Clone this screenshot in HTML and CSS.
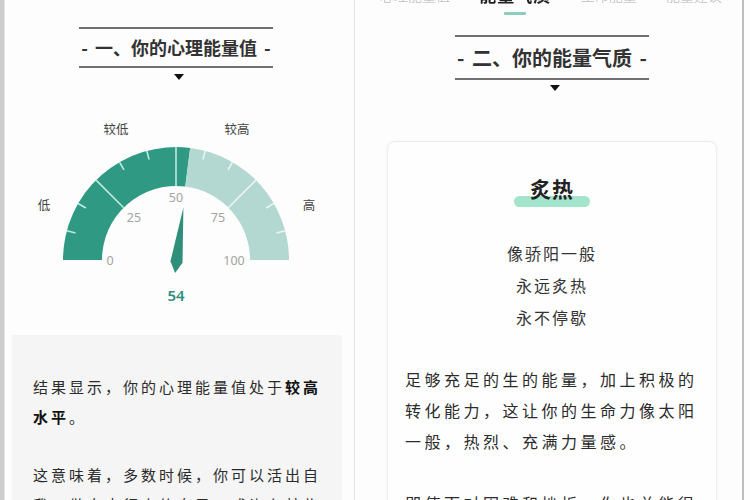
FILE: index.html
```html
<!DOCTYPE html>
<html lang="zh-CN">
<head>
<meta charset="utf-8">
<link rel="stylesheet" href="styles.css">
</head>
<body>
<div class="strip"></div>
<section class="panel left">
  <div class="heading h1">
    <div class="rule"></div>
    <div class="htext">- 一、你的心理能量值 -</div>
    <div class="rule"></div>
  </div>
  <div class="tri"></div>
  <svg class="gauge" width="342" height="195" viewBox="5 110 342 195" xmlns="http://www.w3.org/2000/svg">
    <path d="M63 260 A113 113 0 0 1 190.16 147.89 L185.27 186.58 A74 74 0 0 0 102 260 Z" fill="#2f9984"/>
    <path d="M190.16 147.89 A113 113 0 0 1 289 260 L250 260 A74 74 0 0 0 185.27 186.58 Z" fill="#b3d8d1"/>
    <g stroke="#bdebe1" stroke-width="1.6">
      <line x1="96.1" y1="180.1" x2="123.7" y2="207.7"/>
      <line x1="176" y1="147" x2="176" y2="186"/>
      <line x1="66.9" y1="230.8" x2="75.5" y2="233.1"/>
      <line x1="78.1" y1="203.5" x2="85.9" y2="208"/>
      <line x1="119.5" y1="162.1" x2="124" y2="169.9"/>
      <line x1="146.8" y1="150.9" x2="149.1" y2="159.5"/>
    </g>
    <g stroke="#e9f5f2" stroke-width="1.6">
      <line x1="255.9" y1="180.1" x2="228.3" y2="207.7"/>
      <line x1="205.2" y1="150.9" x2="202.9" y2="159.5"/>
      <line x1="232.5" y1="162.1" x2="228" y2="169.9"/>
      <line x1="273.9" y1="203.5" x2="266.1" y2="208"/>
      <line x1="285.1" y1="230.8" x2="276.5" y2="233.1"/>
    </g>
    <g class="num" text-anchor="middle" dominant-baseline="central">
      <text x="110" y="260">0</text>
      <text x="134" y="217">25</text>
      <text x="176" y="197">50</text>
      <text x="218" y="217">75</text>
      <text x="234" y="260">100</text>
    </g>
    <g class="lvl" text-anchor="middle" dominant-baseline="central">
      <text x="44" y="204">低</text>
      <text x="116" y="128">较低</text>
      <text x="237" y="128">较高</text>
      <text x="309" y="204">高</text>
    </g>
    <polygon points="183.4,207.4 182.5,262.8 175.1,272.9 170.5,261.2" fill="#2e8f7a"/>
    <text class="val" x="176" y="295" text-anchor="middle" dominant-baseline="central">54</text>
  </svg>
  <div class="result">
    <p>结果显示，你的心理能量值处于<b>较高水平</b>。</p>
    <p>这意味着，多数时候，你可以活出自我，做自由行走的自己，或许在某些时候也会感到疲惫。</p>
  </div>
</section>
<div class="divider"></div>
<section class="panel right">
  <div class="tabs">
    <div class="tab">心理能量值</div>
    <div class="tab active"><span>能量气质</span><i class="bar"></i></div>
    <div class="tab">生命能量</div>
    <div class="tab">能量建议</div>
  </div>
  <div class="heading h2">
    <div class="rule"></div>
    <div class="htext">- 二、你的能量气质 -</div>
    <div class="rule"></div>
  </div>
  <div class="tri"></div>
  <div class="card">
    <div class="ctitle"><span class="word">炙热</span><i class="pill"></i></div>
    <div class="verse">
      <div>像骄阳一般</div>
      <div>永远炙热</div>
      <div>永不停歇</div>
    </div>
    <p class="desc">足够充足的生的能量，加上积极的转化能力，这让你的生命力像太阳一般，热烈、充满力量感。</p>
    <p class="desc">即使面对困难和挫折，你也总能很快地重新振作起来。</p>
  </div>
</section>
<div class="edge"></div>
</body>
</html>
```
FILE: styles.css
```css
html, body {
  margin: 0;
  padding: 0;
  width: 750px;
  height: 500px;
  overflow: hidden;
  background: #fdfdfd;
}
body {
  display: flex;
  align-items: stretch;
  font-family: "Noto Sans CJK SC", "Noto Sans", sans-serif;
  color: #2a2a2a;
}
.strip {
  width: 4px;
  flex: none;
  background: #cdcdcd;
  border-right: 1px solid #e6e6e6;
}
.panel {
  flex: none;
  display: flex;
  flex-direction: column;
  align-items: center;
  overflow: hidden;
}
.panel > * {
  flex: none;
}
.left {
  width: 342px;
  padding-right: 7px;
  padding-top: 27px;
}
.divider {
  width: 1px;
  flex: none;
  background: #e2e2e2;
}
.right {
  width: 380px;
  padding-left: 7px;
}
.edge {
  width: 2px;
  flex: none;
  background: #bdbdbd;
}
.heading {
  width: 194px;
  display: flex;
  flex-direction: column;
  align-items: stretch;
}
.rule {
  height: 2px;
  background: #707070;
}
.htext {
  text-align: center;
  font-weight: 700;
  color: #333;
  white-space: nowrap;
  word-spacing: 3px;
}
.h1 .htext {
  font-size: 18px;
  line-height: 37px;
}
.h2 .htext {
  font-size: 20px;
  line-height: 41px;
}
.tri {
  width: 0;
  height: 0;
  border-left: 5px solid transparent;
  border-right: 5px solid transparent;
  border-top: 6px solid #111;
  margin-top: 6px;
}
.left .tri { margin-left: 6px; }
.right .tri { margin-left: 6px; margin-top: 5px; }
.gauge {
  display: block;
  margin-top: 30px;
}
.gauge .num {
  font-family: "Noto Sans", sans-serif;
  font-size: 12.5px;
  fill: #a3a3a3;
}
.gauge .lvl {
  font-family: "Noto Sans CJK SC", sans-serif;
  font-size: 12.5px;
  fill: #444;
}
.gauge .val {
  font-family: "Noto Sans", sans-serif;
  font-size: 15px;
  font-weight: 600;
  fill: #2e8f7a;
}
.result {
  align-self: stretch;
  margin: 30px 5px 0 7px;
  background: #f5f5f5;
  padding: 37px 14px 0 21px;
  height: 200px;
}
.result p {
  margin: 0 0 28px;
  font-size: 15px;
  line-height: 30px;
  letter-spacing: 3px;
  color: #2b2b2b;
}
.result b {
  color: #111;
  font-weight: 700;
}
.tabs {
  align-self: stretch;
  height: 15px;
  display: flex;
  justify-content: space-between;
  padding: 0 20px 0 18px;
}
.tab {
  font-size: 14px;
  line-height: 20px;
  margin-top: -15px;
  color: #c8c8c8;
  filter: blur(0.6px);
  white-space: nowrap;
}
.tab.active {
  display: flex;
  flex-direction: column;
  align-items: center;
  color: #222;
  font-weight: 700;
  font-size: 17px;
  letter-spacing: 1px;
}
.tab.active .bar {
  width: 22px;
  height: 3px;
  background: #8ccdbf;
  margin-top: 7px;
  border-radius: 1px;
}
.h2 { margin-top: 20px; }
.card {
  width: 294px;
  margin-top: 50px;
  border: 1px solid #ececec;
  border-radius: 8px;
  box-shadow: 0 0 4px rgba(0,0,0,0.04);
  padding: 31px 17px 0;
  height: 400px;
  background: #fefefe;
}
.ctitle {
  display: flex;
  flex-direction: column;
  align-items: center;
}
.word {
  position: relative;
  z-index: 1;
  font-size: 21px;
  line-height: 30px;
  font-weight: 700;
  color: #222;
  letter-spacing: 1px;
}
.pill {
  display: block;
  width: 76px;
  height: 11px;
  margin-top: -7px;
  border-radius: 6px;
  background: #a3e4cc;
}
.verse {
  margin-top: 30px;
  text-align: center;
  font-size: 16px;
  line-height: 32px;
  letter-spacing: 2px;
  color: #333;
}
.desc {
  margin: 31px 0 0;
  font-size: 16px;
  line-height: 31px;
  letter-spacing: 3.5px;
  color: #2b2b2b;
}
```
